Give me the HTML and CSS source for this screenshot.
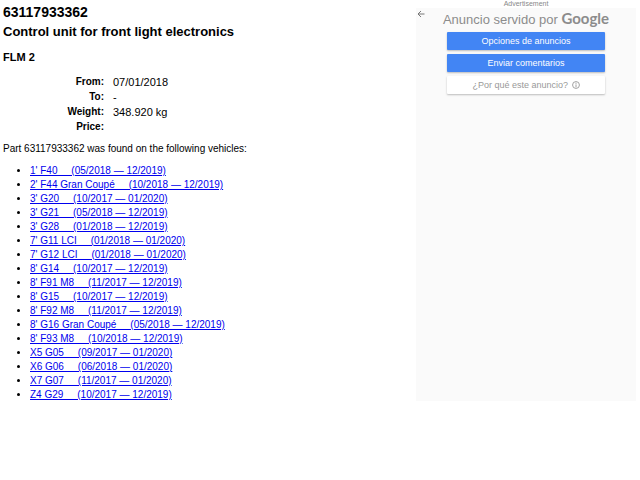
FILE: index.html
```
<!DOCTYPE html>
<html lang="en">
<head>
    <meta charset="UTF-8">
    <meta name="viewport" content="width=device-width, initial-scale=1.0">
    <title>63117933362 - Control unit for front light electronics</title>
    <link rel="stylesheet" href="styles.css">
</head>
<body>
    <main class="part">
        <h1>63117933362</h1>
        <h2>Control unit for front light electronics</h2>
        <h3>FLM 2</h3>

        <table class="part-info">
            <tr><th scope="row">From:</th><td>07/01/2018</td></tr>
            <tr><th scope="row">To:</th><td>-</td></tr>
            <tr><th scope="row">Weight:</th><td>348.920 kg</td></tr>
            <tr><th scope="row">Price:</th><td></td></tr>
        </table>

        <p class="found">Part 63117933362 was found on the following vehicles:</p>

        <ul class="vehicles">
            <li><a href="#">1' F40 &nbsp; &nbsp; (05/2018 — 12/2019)</a></li>
            <li><a href="#">2' F44 Gran Coupé &nbsp; &nbsp; (10/2018 — 12/2019)</a></li>
            <li><a href="#">3' G20 &nbsp; &nbsp; (10/2017 — 01/2020)</a></li>
            <li><a href="#">3' G21 &nbsp; &nbsp; (05/2018 — 12/2019)</a></li>
            <li><a href="#">3' G28 &nbsp; &nbsp; (01/2018 — 12/2019)</a></li>
            <li><a href="#">7' G11 LCI &nbsp; &nbsp; (01/2018 — 01/2020)</a></li>
            <li><a href="#">7' G12 LCI &nbsp; &nbsp; (01/2018 — 01/2020)</a></li>
            <li><a href="#">8' G14 &nbsp; &nbsp; (10/2017 — 12/2019)</a></li>
            <li><a href="#">8' F91 M8 &nbsp; &nbsp; (11/2017 — 12/2019)</a></li>
            <li><a href="#">8' G15 &nbsp; &nbsp; (10/2017 — 12/2019)</a></li>
            <li><a href="#">8' F92 M8 &nbsp; &nbsp; (11/2017 — 12/2019)</a></li>
            <li><a href="#">8' G16 Gran Coupé &nbsp; &nbsp; (05/2018 — 12/2019)</a></li>
            <li><a href="#">8' F93 M8 &nbsp; &nbsp; (10/2018 — 12/2019)</a></li>
            <li><a href="#">X5 G05 &nbsp; &nbsp; (09/2017 — 01/2020)</a></li>
            <li><a href="#">X6 G06 &nbsp; &nbsp; (06/2018 — 01/2020)</a></li>
            <li><a href="#">X7 G07 &nbsp; &nbsp; (11/2017 — 01/2020)</a></li>
            <li><a href="#">Z4 G29 &nbsp; &nbsp; (10/2017 — 12/2019)</a></li>
        </ul>
    </main>

    <aside class="ad">
        <div class="ad-label">Advertisement</div>
        <div class="ad-box" lang="es">
            <button class="back-btn" type="button" aria-label="Atrás">
                <svg width="8" height="8" viewBox="0 0 8 8" fill="none" stroke="currentColor" stroke-width="1">
                    <path d="M7.5 4H1M4 1L1 4l3 3"/>
                </svg>
            </button>
            <div class="ad-title">Anuncio servido por <span class="google">Google</span></div>
            <div class="ad-actions">
                <button class="ad-btn" type="button">Opciones de anuncios</button>
                <button class="ad-btn" type="button">Enviar comentarios</button>
                <button class="ad-btn why" type="button">
                    ¿Por qué este anuncio?
                    <svg width="7" height="7" viewBox="0 0 14 14" fill="none" stroke="currentColor" stroke-width="1.6">
                        <circle cx="7" cy="7" r="6"/>
                        <path d="M7 6v5M7 3v2"/>
                    </svg>
                </button>
            </div>
        </div>
    </aside>
</body>
</html>
```

FILE: styles.css
```
* {
    box-sizing: border-box;
}

body {
    margin: 0;
    padding: 0 4px 0 3px;
    display: flex;
    align-items: flex-start;
    background: #fff;
    color: #000;
    font-family: "Liberation Sans", Arial, Helvetica, sans-serif;
    font-size: 10px;
    line-height: 14px;
}

.part {
    flex: 1;
    padding-top: 2px;
}

h1,
h2,
h3 {
    margin: 0;
}

h1 {
    font-size: 14px;
    line-height: 20px;
}

h2 {
    font-size: 13px;
    line-height: 20px;
}

h3 {
    margin-top: 8px;
    font-size: 11px;
    line-height: 14px;
}

/* Part details */
.part-info {
    margin-top: 10px;
    border-collapse: collapse;
}

.part-info th,
.part-info td {
    padding: 0;
    height: 15px;
}

.part-info th {
    width: 101px;
    text-align: right;
    font-size: 10px;
}

.part-info td {
    padding-left: 9px;
    font-size: 11px;
}

.found {
    margin: 8px 0;
}

.vehicles {
    margin: 0;
    padding-left: 27px;
}

.vehicles a {
    color: #0000ee;
}

/* Advertisement */
.ad {
    width: 220px;
}

.ad-label {
    color: #888;
    font-size: 7px;
    line-height: 8px;
    text-align: center;
}

.ad-box {
    position: relative;
    min-height: 393px;
    padding-top: 2px;
    background: #fafafa;
    color: #8c8c8c;
}

.back-btn {
    position: absolute;
    top: 2px;
    left: 1px;
    display: flex;
    padding: 0;
    border: none;
    background: none;
    color: #777;
    cursor: pointer;
}

.ad-title {
    font-size: 13px;
    line-height: 20px;
    text-align: center;
}

.google {
    font-family: Lato, sans-serif;
    font-size: 15px;
    line-height: 1;
    font-weight: 700;
}

.ad-actions {
    display: flex;
    flex-direction: column;
    gap: 4px;
    margin: 2px 31px;
}

.ad-btn {
    height: 18px;
    padding: 0;
    border: none;
    border-radius: 1px;
    background: #4285f4;
    box-shadow: 0 1px 2px rgba(0, 0, 0, 0.25);
    color: #fff;
    font-family: "Liberation Sans", Arial, Helvetica, sans-serif;
    font-size: 9px;
    line-height: 18px;
    cursor: pointer;
}

.ad-btn.why {
    background: #fff;
    color: #999;
}

.ad-btn svg {
    margin-left: 1px;
    vertical-align: -1px;
    width: 8px;
    height: 8px;
}
```
